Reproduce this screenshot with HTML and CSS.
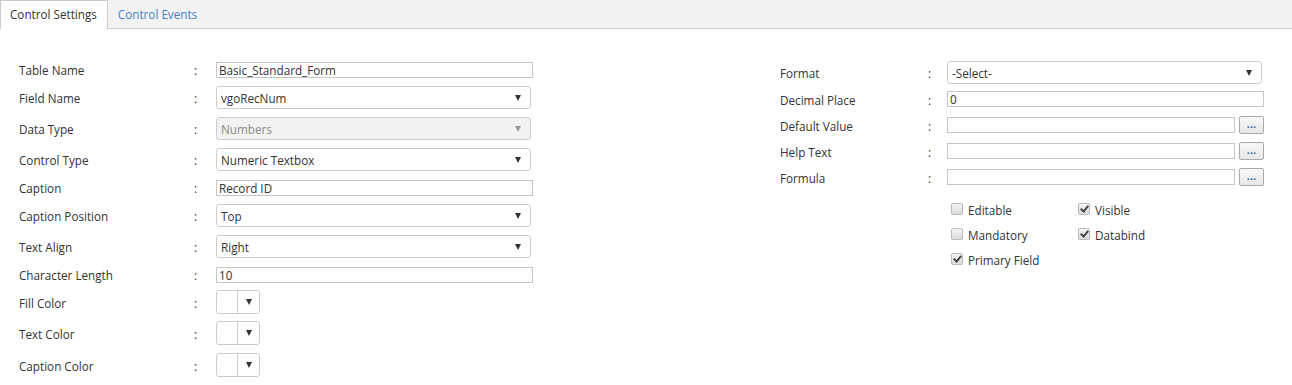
FILE: index.html
```html
<!DOCTYPE html>
<html>
<head>
<meta charset="utf-8">
<link rel="stylesheet" href="styles.css">
</head>
<body>
<div class="tabs">
  <div class="tab active">Control Settings</div>
  <div class="tab">Control Events</div>
</div>
<div class="content">
  <div class="col left">
    <div class="row r-text"><span class="lbl">Table Name</span><span class="colon">:</span><input class="txt" type="text" value="Basic_Standard_Form"></div>
    <div class="row r-sel"><span class="lbl">Field Name</span><span class="colon">:</span><div class="sel"><span>vgoRecNum</span><i class="arrow"></i></div></div>
    <div class="row r-sel"><span class="lbl">Data Type</span><span class="colon">:</span><div class="sel disabled"><span>Numbers</span><i class="arrow"></i></div></div>
    <div class="row r-sel"><span class="lbl">Control Type</span><span class="colon">:</span><div class="sel"><span>Numeric Textbox</span><i class="arrow"></i></div></div>
    <div class="row r-text"><span class="lbl">Caption</span><span class="colon">:</span><input class="txt" type="text" value="Record ID"></div>
    <div class="row r-sel"><span class="lbl">Caption Position</span><span class="colon">:</span><div class="sel"><span>Top</span><i class="arrow"></i></div></div>
    <div class="row r-sel"><span class="lbl">Text Align</span><span class="colon">:</span><div class="sel"><span>Right</span><i class="arrow"></i></div></div>
    <div class="row r-text"><span class="lbl">Character Length</span><span class="colon">:</span><input class="txt" type="text" value="10"></div>
    <div class="row r-color first"><span class="lbl">Fill Color</span><span class="colon">:</span><div class="color"><span class="swatch"></span><span class="cbtn"><i class="arrow"></i></span></div></div>
    <div class="row r-color"><span class="lbl">Text Color</span><span class="colon">:</span><div class="color"><span class="swatch"></span><span class="cbtn"><i class="arrow"></i></span></div></div>
    <div class="row r-color"><span class="lbl">Caption Color</span><span class="colon">:</span><div class="color"><span class="swatch"></span><span class="cbtn"><i class="arrow"></i></span></div></div>
  </div>
  <div class="col right">
    <div class="row r-fmt"><span class="lbl">Format</span><span class="colon">:</span><div class="sel wide"><span>-Select-</span><i class="arrow"></i></div></div>
    <div class="row r-rtext"><span class="lbl">Decimal Place</span><span class="colon">:</span><input class="txt wide" type="text" value="0"></div>
    <div class="row r-rtext"><span class="lbl">Default Value</span><span class="colon">:</span><input class="txt short" type="text" value=""><button class="more">...</button></div>
    <div class="row r-rtext"><span class="lbl">Help Text</span><span class="colon">:</span><input class="txt short" type="text" value=""><button class="more">...</button></div>
    <div class="row r-rtext"><span class="lbl">Formula</span><span class="colon">:</span><input class="txt short" type="text" value=""><button class="more">...</button></div>
    <div class="checks">
      <label class="chk"><span class="box"></span>Editable</label>
      <label class="chk"><span class="box on"></span>Visible</label>
      <label class="chk"><span class="box"></span>Mandatory</label>
      <label class="chk"><span class="box on"></span>Databind</label>
      <label class="chk"><span class="box on"></span>Primary Field</label>
    </div>
  </div>
</div>
</body>
</html>
```
FILE: styles.css
```css
* { box-sizing: border-box; }
html, body { margin: 0; padding: 0; background: #fff; }
body {
  font-family: "Open Sans", "Noto Sans", "Liberation Sans", sans-serif;
  font-size: 11.7px;
  color: #333;
}
.tabs {
  display: flex;
  height: 29px;
  background: #f3f3f3;
  border-bottom: 1px solid #cccccc;
}
.tab {
  height: 28px;
  line-height: 28px;
  padding: 0 10px;
  color: #3d7fc6;
}
.tab.active {
  background: #fff;
  color: #333;
  border: 1px solid #cccccc;
  border-bottom: none;
  height: 29px;
  line-height: 27px;
  padding: 0 10px 0 9px;
  margin-bottom: -1px;
}
.content {
  display: flex;
  padding: 28px 0 0 19px;
}
.col { display: flex; flex-direction: column; }
.left { width: 514px; }
.right { margin-left: 247px; width: 484px; padding-top: 1px; }
.row { display: flex; align-items: center; }
.lbl, .colon { padding-top: 1px; }
.r-text { height: 25px; }
.r-rtext { height: 26px; }
.r-sel { height: 31px; }
.r-color { height: 32px; }
.r-color.first { height: 30px; }
.r-fmt { height: 28px; }
.left .lbl { width: 175px; }
.right .lbl { width: 148px; }
.colon { width: 22px; }
.right .colon { width: 19px; }
.txt {
  font: inherit;
  color: #333;
  width: 317px;
  height: 16px;
  border: 1px solid #c6c6c6;
  padding: 0 2px;
  margin: 0;
  outline: none;
  background: #fff;
}
.txt.wide { width: 317px; }
.txt.short { width: 288px; }
.sel {
  width: 315px;
  height: 23px;
  border: 1px solid #cdcdcd;
  border-radius: 3px;
  display: flex;
  align-items: center;
  justify-content: space-between;
  padding: 1px 9px 0 4px;
  background: #fff;
}
.sel.wide { width: 315px; }
.sel.disabled { background: #f2f2f2; color: #8a8a8a; }
.sel.disabled .arrow { border-top-color: #999; }
.arrow {
  display: block;
  width: 0; height: 0;
  border-left: 3.5px solid transparent;
  border-right: 3.5px solid transparent;
  border-top: 6px solid #333;
}
.color {
  display: flex;
  width: 44px;
  height: 24px;
  border: 1px solid #cdcdcd;
  border-radius: 3px;
  background: #fff;
}
.swatch { width: 21px; border-right: 1px solid #cdcdcd; }
.cbtn { flex: 1; display: flex; align-items: center; justify-content: center; }
.more {
  margin-left: 4px;
  width: 25px;
  height: 18px;
  padding: 0 0 2px;
  border: 1px solid #a9a9a9;
  border-radius: 2px;
  background: linear-gradient(#f8f8f8, #e6e6e6);
  color: #3f6a9e;
  font: bold 11px "Open Sans", sans-serif;
  line-height: 10px;
  letter-spacing: 0;
}
.checks {
  display: grid;
  grid-template-columns: 127px 120px;
  grid-auto-rows: 25px;
  margin: 7px 0 0 171px;
}
.chk { display: flex; align-items: center; }
.box {
  width: 12px; height: 12px;
  border: 1px solid #b9b9b9;
  border-radius: 2px;
  background: linear-gradient(#f4f4f4, #dcdcdc);
  margin-right: 5px;
  margin-top: -1px;
  position: relative;
}
.box.on::after {
  content: "";
  position: absolute;
  left: 3px; top: 0px;
  width: 3px; height: 6px;
  border-right: 2px solid #444;
  border-bottom: 2px solid #444;
  transform: rotate(40deg);
}
```
